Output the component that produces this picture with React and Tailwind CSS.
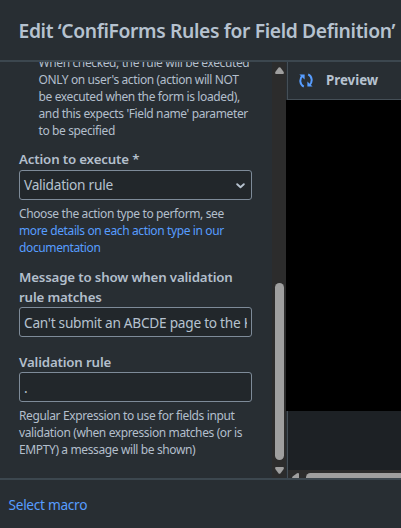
import React, { useState } from "react";

const Description = ({ children, className = "" }) => (
  <p
    className={`text-[12px] leading-[17px] tracking-[-0.38px] whitespace-nowrap text-[#b3bfcc] ${className}`}
  >
    {children}
  </p>
);

const Label = ({ children, htmlFor }) => (
  <label
    htmlFor={htmlFor}
    className="block text-[13.3px] leading-5 tracking-[-0.17px] font-semibold whitespace-nowrap text-[#b3bfcc]"
  >
    {children}
  </label>
);

const inputClass =
  "block w-[233px] h-[30px] pl-[4px] pr-1 text-[13.7px] tracking-[-0.27px] rounded-[3px] border border-[#7e8b99] bg-[#22272b] text-[#b6c2cf] outline-none";

const App = () => {
  const [message, setMessage] = useState(
    "Can't submit an ABCDE page to the Knowledge Base"
  );
  const [rule, setRule] = useState(".");

  return (
    <div className="w-[401px] h-[528px] flex flex-col overflow-hidden bg-[#282e33] font-['Noto_Sans','Open_Sans',sans-serif]">
      {/* Header */}
      <header className="h-[62px] shrink-0 flex items-center pl-[18.5px] pt-[2px] border-b-2 border-[#3c474f]">
        <h1 className="text-[19.3px] tracking-[-0.37px] font-semibold whitespace-nowrap text-[#b6c2cf]">
          Edit ‘ConfiForms Rules for Field Definition’
        </h1>
      </header>

      <div className="h-[416px] shrink-0 flex overflow-hidden">
        {/* Parameters */}
        <div className="w-[272px] shrink-0 pl-[19px] overflow-hidden">
          <Description className="-mt-2 pl-[19.5px]">
            When checked, the rule will be executed
            <br />
            ONLY on user's action (action will NOT
            <br />
            be executed when the form is loaded),
            <br />
            and this expects 'Field name' parameter
            <br />
            to be specified
          </Description>

          <div className="mt-[10px]">
            <Label htmlFor="action">Action to execute *</Label>
            <button
              id="action"
              className={`${inputClass} mt-px flex! items-center justify-between text-left`}
            >
              Validation rule
              <svg
                className="w-[9px] h-[6px] mr-[2px] mt-[2px]"
                viewBox="0 0 9 6"
                fill="none"
                stroke="#b6c2cf"
                strokeWidth="1.9"
                strokeLinecap="round"
                strokeLinejoin="round"
              >
                <path d="M1.2 1.2l3.3 3 3.3-3" />
              </svg>
            </button>
            <Description className="mt-[5px]">
              Choose the action type to perform, see
              <br />
              <a href="#" className="text-[#579dff]">
                more details on each action type in our
                <br />
                documentation
              </a>
            </Description>
          </div>

          <div className="mt-[11px]">
            <Label htmlFor="message">
              Message to show when validation
              <br />
              rule matches
            </Label>
            <input
              id="message"
              className={inputClass}
              value={message}
              onChange={(e) => setMessage(e.target.value)}
            />
          </div>

          <div className="mt-[15px]">
            <Label htmlFor="rule">Validation rule</Label>
            <input
              id="rule"
              className={inputClass}
              value={rule}
              onChange={(e) => setRule(e.target.value)}
            />
            <Description className="mt-[5px]">
              Regular Expression to use for fields input
              <br />
              validation (when expression matches (or is
              <br />
              EMPTY) a message will be shown)
            </Description>
          </div>
        </div>

        {/* Vertical scrollbar */}
        <div className="w-[14px] shrink-0 flex flex-col items-center bg-[#2c2c2c]">
          <svg className="mt-[5px] ml-px w-[9px] h-[7px]" viewBox="0 0 9 7" fill="#9f9f9f">
            <path d="M3.6.6Q4.5-.3 5.4.6L8.7 5Q9.3 7 8 7H1Q-.3 7 .3 5z" />
          </svg>
          <div className="mt-[209px] ml-px w-[9px] h-[177px] rounded-full bg-[#9f9f9f]" />
          <svg className="mt-[7px] ml-px w-[9px] h-[7px]" viewBox="0 0 9 7" fill="#9f9f9f">
            <path d="M3.6 6.4Q4.5 7.3 5.4 6.4L8.7 2Q9.3 0 8 0H1Q-.3 0 .3 2z" />
          </svg>
        </div>

        {/* Preview */}
        <div className="flex-1 flex flex-col">
          <div className="h-[38px] shrink-0 flex items-center ml-px pl-[11px] border-l border-b border-[#454f57]">
            <svg
              className="w-[14px] h-[15px]"
              viewBox="0 0 14 15"
              fill="none"
              stroke="#579dff"
              strokeWidth="2"
            >
              <path d="M4.8 13.6C.6 11.6.2 5.6 3.6 2.6" />
              <path d="M.4 1.6h5.2v5z" fill="#579dff" stroke="none" />
              <path d="M9.2 1.4c4.2 2 4.6 8 1.2 11" />
              <path d="M13.6 13.4H8.4v-5z" fill="#579dff" stroke="none" />
            </svg>
            <span className="ml-[13px] text-[13.3px] font-bold text-[#b6c2cf]">
              Preview
            </span>
          </div>
          <div className="h-[311px] shrink-0 bg-black" />
          <div className="flex-1 flex flex-col ml-px border-l border-[#454f57] bg-[#1d2125]">
            <div className="flex-1" />
            {/* Horizontal scrollbar, cut off by the footer */}
            <div className="h-2 flex items-start pt-[3px] bg-[#2c2c2c] overflow-hidden">
              <svg className="ml-[4px] w-[7px] h-[9px] shrink-0" viewBox="0 0 7 9" fill="#9f9f9f">
                <path d="M.6 3.6Q-.3 4.5.6 5.4L5 8.7Q7 9.3 7 8V1Q7-.3 5 .3z" />
              </svg>
              <div className="ml-[7px] flex-1 h-[9px] rounded-l-full bg-[#9f9f9f]" />
            </div>
          </div>
        </div>
      </div>

      {/* Footer */}
      <footer className="flex-1 flex items-center pl-[8.5px] pt-[2px] border-t-2 border-[#3c474f]">
        <a href="#" className="text-[13.7px] tracking-[-0.3px] text-[#579dff]">
          Select macro
        </a>
      </footer>
    </div>
  );
};

export default App;
